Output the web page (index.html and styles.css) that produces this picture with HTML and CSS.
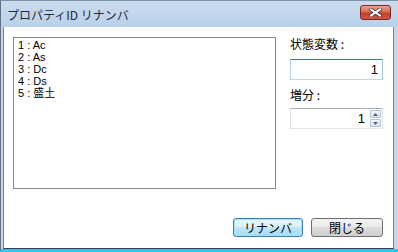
FILE: index.html
```html
<!DOCTYPE html>
<html>
<head>
	<title>プロパティID リナンバ</title>
	<link rel="stylesheet" href="styles.css">
</head>
<body>
	<div class="window">
		<div class="titlebar">
			<span class="title">プロパティID リナンバ</span>
			<div class="close">
				<svg width="13" height="9" viewBox="0 0 13 9">
					<path d="M2 1.5 L11 7.5 M11 1.5 L2 7.5" stroke="#3b3b3b" stroke-width="3.6" stroke-linecap="square" fill="none"/>
					<path d="M2 1.5 L11 7.5 M11 1.5 L2 7.5" stroke="#ffffff" stroke-width="2" stroke-linecap="square" fill="none"/>
				</svg>
			</div>
		</div>
		<div class="client">
			<div class="main">
				<div class="list">
					<div class="item">1 : Ac</div>
					<div class="item">2 : As</div>
					<div class="item">3 : Dc</div>
					<div class="item">4 : Ds</div>
					<div class="item">5 : 盛土</div>
				</div>
				<div class="side">
					<div class="label">状態変数 :</div>
					<div class="textbox focused">1</div>
					<div class="label second">増分 :</div>
					<div class="spin">
						<div class="textbox">1</div>
						<div class="spin-buttons">
							<div class="spin-btn">
								<svg width="5" height="3" viewBox="0 0 5 3"><path d="M0 3 L2.5 0 L5 3 Z" fill="#4d6185"/></svg>
							</div>
							<div class="spin-btn">
								<svg width="5" height="3" viewBox="0 0 5 3"><path d="M0 0 L2.5 3 L5 0 Z" fill="#4d6185"/></svg>
							</div>
						</div>
					</div>
				</div>
			</div>
			<div class="buttons">
				<div class="button default">リナンバ</div>
				<div class="button">閉じる</div>
			</div>
		</div>
	</div>
</body>
</html>
```

FILE: styles.css
```css
   body {
	  margin: 0;
	  font-family: "Liberation Sans", "Noto Sans CJK JP", sans-serif;
	  font-size: 12px;
	  color: #000;
   }
   .window {
	  width: 398px;
	  height: 252px;
	  box-sizing: border-box;
	  display: flex;
	  flex-direction: column;
	  background: #c3d6ec;
	  border-left: 1px solid #5e6f86;
	  border-top: 1px solid #7d90aa;
	  border-bottom: 3px solid #3cc3e3;
	  padding: 0 4px 0 2px;
   }
   .titlebar {
	  height: 26px;
	  display: flex;
	  align-items: center;
	  justify-content: space-between;
	  background: linear-gradient(#cddcee, #b9d0ea);
	  margin: 0 -4px 0 -2px;
	  padding: 0 6px 0 6px;
   }
   .title {
	  font-family: "Noto Sans CJK JP", sans-serif;
	  font-size: 12px;
	  color: #1f2a3a;
	  margin-top: 1px;
   }
   .close {
	  width: 29px;
	  height: 13px;
	  margin-top: -3px;
	  margin-right: 1px;
	  border: 1px solid #7a2a22;
	  border-radius: 3px;
	  background: linear-gradient(#e9a493, #d66a55 45%, #c2412c 55%, #d0573f);
	  display: flex;
	  align-items: center;
	  justify-content: center;
   }
   .close svg {
	  display: block;
   }
   .client {
	  flex: 1;
	  background: #fff;
	  border-left: 1px solid #6f82a0;
	  border-right: 1px solid #6f82a0;
	  border-bottom: 1px solid #30405a;
	  padding: 10px 0 0 9px;
   }
   .main {
	  display: flex;
   }
   .list {
	  width: 263px;
	  height: 152px;
	  box-sizing: border-box;
	  border: 1px solid #828790;
	  padding: 1px 0 0 4px;
   }
   .item {
	  font-size: 11px;
	  line-height: 12px;
	  height: 12px;
	  overflow: hidden;
   }
   .side {
	  width: 93px;
	  margin-left: 14px;
   }
   .label {
	  font-family: "Noto Sans CJK JP", sans-serif;
	  line-height: 14px;
	  height: 14px;
   }
   .label.second {
	  margin-top: 8px;
   }
   .textbox {
	  height: 21px;
	  box-sizing: border-box;
	  border: 1px solid #abadb3;
	  border-color: #abadb3 #e2e3ea #e3e9ef #dbdfe6;
	  text-align: right;
	  padding: 0 4px;
	  line-height: 19px;
	  font-size: 13px;
	  margin-top: 8px;
   }
   .textbox.focused {
	  border-color: #3d7bad #a4c9e3 #b7d9ed #b5cfe7;
   }
   .spin {
	  display: flex;
	  margin-top: 6px;
	  height: 21px;
   }
   .spin .textbox {
	  flex: 1;
	  margin-top: 0;
	  border-right: none;
	  padding-right: 2px;
   }
   .spin-buttons {
	  width: 16px;
	  box-sizing: border-box;
	  border: 1px solid #abadb3;
	  border-color: #abadb3 #dbdfe6 #e3e9ef #fff;
	  display: flex;
	  flex-direction: column;
	  padding: 1px 1px 1px 2px;
	  gap: 1px;
   }
   .spin-btn {
	  flex: 1;
	  border: 1px solid #b4c2d6;
	  border-radius: 1px;
	  background: linear-gradient(#f3f6fb, #dbe3ef);
	  display: flex;
	  align-items: center;
	  justify-content: center;
   }
   .spin-btn svg {
	  display: block;
   }
   .buttons {
	  display: flex;
	  justify-content: flex-end;
	  gap: 8px;
	  margin-top: 29px;
	  margin-right: 10px;
   }
   .button {
	  width: 70px;
	  height: 19px;
	  box-sizing: border-box;
	  border: 1px solid #707070;
	  border-radius: 3px;
	  background: linear-gradient(#f2f2f2, #ebebeb 50%, #dddddd 50%, #cfcfcf);
	  text-align: center;
	  line-height: 17px;
	  font-family: "Noto Sans CJK JP", sans-serif;
	  font-size: 12px;
   }
   .button + .button {
	  width: 72px;
   }
   .button.default {
	  border-color: #3c7fb1;
	  box-shadow: inset 0 0 0 1px #9fe2fb;
	  background: linear-gradient(#eaf6fd, #d9f0fc 50%, #bee6fd 50%, #a7d9f5);
   }
```
